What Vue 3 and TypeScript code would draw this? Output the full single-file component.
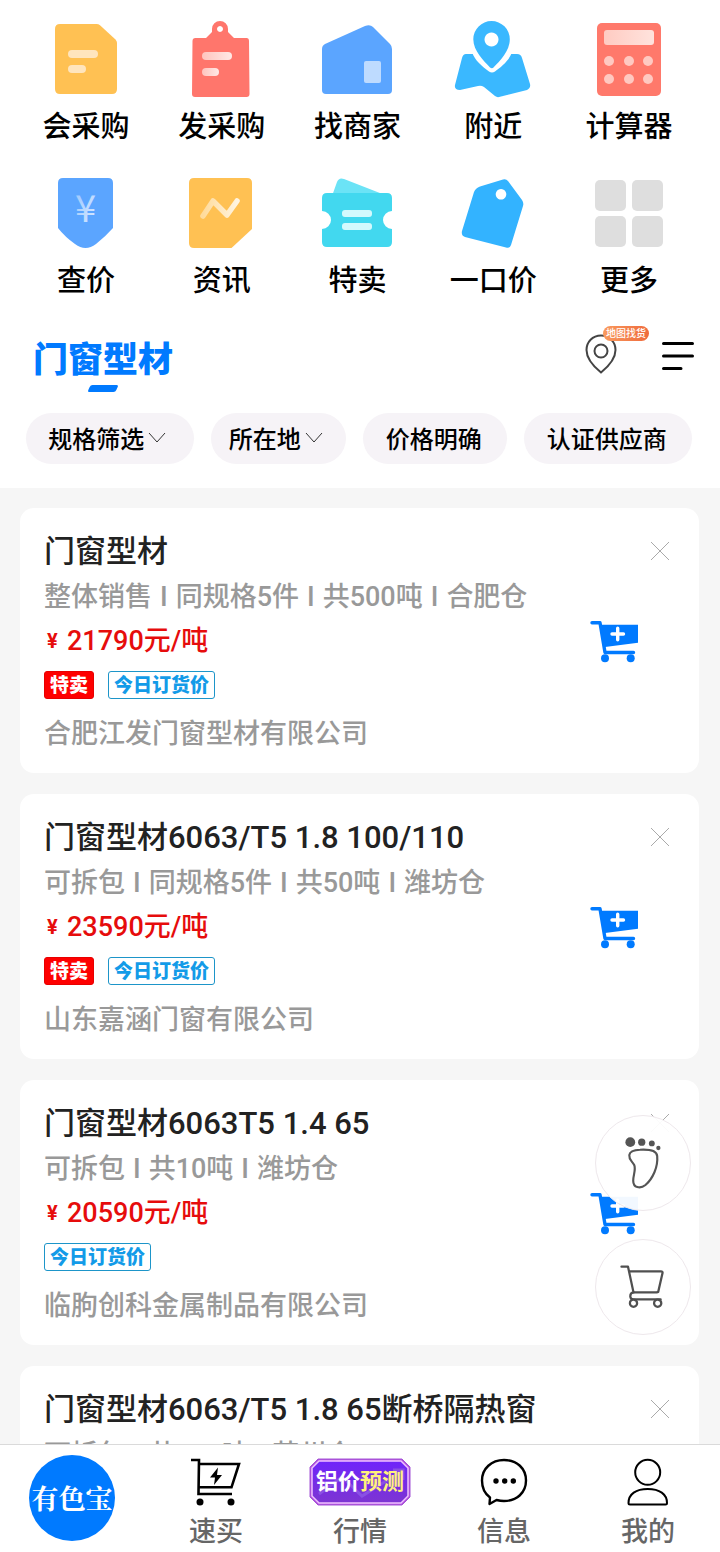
<script setup lang="ts">
interface Product {
  title: string
  meta: string[]
  price?: string
  special?: boolean
  company?: string
}

interface Filter {
  label: string
  dropdown: boolean
}

const filters: Filter[] = [
  { label: '规格筛选', dropdown: true },
  { label: '所在地', dropdown: true },
  { label: '价格明确', dropdown: false },
  { label: '认证供应商', dropdown: false },
]

const products: Product[] = [
  { title: '门窗型材', meta: ['整体销售', '同规格5件', '共500吨', '合肥仓'], price: '21790元/吨', special: true, company: '合肥江发门窗型材有限公司' },
  { title: '门窗型材6063/T5 1.8 100/110', meta: ['可拆包', '同规格5件', '共50吨', '潍坊仓'], price: '23590元/吨', special: true, company: '山东嘉涵门窗有限公司' },
  { title: '门窗型材6063T5 1.4 65', meta: ['可拆包', '共10吨', '潍坊仓'], price: '20590元/吨', special: false, company: '临朐创科金属制品有限公司' },
  { title: '门窗型材6063/T5 1.8 65断桥隔热窗', meta: ['可拆包', '共100吨', '苏州仓'] },
]
</script>

<template>
  <div class="app">
    <main class="content">
      <section class="top">
        <nav class="shortcuts" aria-label="快捷入口">
          <a class="shortcut" href="#">
            <svg viewBox="0 0 80 80" aria-hidden="true">
              <path d="M14 6H50.500Q52.500 6 54 7.300L69.500 21.500Q71 23 71 25V71Q71 76 66 76H14Q9 76 9 71V11Q9 6 14 6Z" fill="#ffc153" />
              <rect x="22" y="32" width="30" height="8" rx="4" fill="#ffe5bd" />
              <rect x="22" y="47" width="18" height="8" rx="4" fill="#ffe5bd" />
            </svg>
            <span>会采购</span>
          </a>
          <a class="shortcut" href="#">
            <svg viewBox="0 0 80 80" aria-hidden="true">
              <defs>
                <linearGradient id="redLine" x1="0" x2="1">
                  <stop offset="0" stop-color="#ffc4be" />
                  <stop offset="1" stop-color="#ffe9e6" />
                </linearGradient>
              </defs>
              <path fill-rule="evenodd" d="M30 11a8 8 0 0 1 16 0V14L52 20H64.500Q67 20 67 23L67.500 76Q67.500 79 64.500 79H13Q10 79 10 76L10.500 23Q10.500 20 13.500 20H24L30 14ZM38 8a3 3 0 1 0 0.010 0Z" fill="#ff766c" />
              <rect x="20" y="34" width="30" height="8" rx="4" fill="url(#redLine)" />
              <rect x="20" y="50" width="17" height="8" rx="4" fill="url(#redLine)" />
            </svg>
            <span>发采购</span>
          </a>
          <a class="shortcut" href="#">
            <svg viewBox="0 0 80 80" aria-hidden="true">
              <path d="M8 26L48 8Q53 6 56 9L73 26Q75 28 75 31V72Q75 76 71 76H9Q5 76 5 72V31Q5 27.500 8 26Z" fill="#5ba5ff" />
              <rect x="47" y="43" width="17" height="22" rx="2" fill="#bedbff" />
            </svg>
            <span>找商家</span>
          </a>
          <a class="shortcut" href="#">
            <svg viewBox="0 0 80 80" aria-hidden="true">
              <path d="M13 36H64Q68 36 69 40L77 66Q78 70 74 72L46 79Q44 79.500 42 78L31 69Q28 67 25 68L7 72Q1 72 2 67L9 40Q10 36 13 36Z" fill="#3ab8ff" />
              <path d="M19 34H59C56 43 48 49 42 53.500Q39 55.500 36 53.500C29 48 22 43 19 34Z" fill="#fff" />
              <path fill-rule="evenodd" d="M38.500 3a18.300 18.300 0 0 1 18.300 18.300C56.800 33 47 43 40.500 49.500Q39 51 37 49.500C31 43 20.300 33 20.300 21.300A18.300 18.300 0 0 1 38.500 3ZM38.500 14.500a7 7 0 1 0 0.010 0Z" fill="#3ab8ff" />
            </svg>
            <span>附近</span>
          </a>
          <a class="shortcut" href="#">
            <svg viewBox="0 0 80 80" aria-hidden="true">
              <defs>
                <linearGradient id="screen" x1="0" x2="1">
                  <stop offset="0" stop-color="#ffcbc2" />
                  <stop offset="1" stop-color="#ffe3dd" />
                </linearGradient>
              </defs>
              <rect x="8" y="5" width="64" height="73" rx="5" fill="#ff796b" />
              <rect x="15" y="12" width="50" height="15" rx="3" fill="url(#screen)" />
              <g fill="#ffc9c1">
                <circle cx="20" cy="43" r="5" /><circle cx="40" cy="43" r="5" /><circle cx="59" cy="43" r="5" />
                <circle cx="20" cy="61" r="5" /><circle cx="40" cy="61" r="5" /><circle cx="59" cy="61" r="5" />
              </g>
            </svg>
            <span>计算器</span>
          </a>
          <a class="shortcut" href="#">
            <svg viewBox="0 0 80 80" aria-hidden="true">
              <defs>
                <linearGradient id="yenFill" x1="0" y1="0" x2="1" y2="1">
                  <stop offset="0" stop-color="#8fc1ff" />
                  <stop offset="1" stop-color="#e3efff" />
                </linearGradient>
              </defs>
              <path d="M17 6H62Q67 6 67 11V56Q60 64 50 72Q39.500 80 29 72Q19 65 12 56V11Q12 6 17 6Z" fill="#5ba5ff" />
              <text class="yen-glyph" x="39.500" y="50" text-anchor="middle" fill="url(#yenFill)">¥</text>
            </svg>
            <span>查价</span>
          </a>
          <a class="shortcut" href="#">
            <svg viewBox="0 0 80 80" aria-hidden="true">
              <defs>
                <linearGradient id="trend" x1="0" x2="1">
                  <stop offset="0" stop-color="#ffdb9b" />
                  <stop offset="1" stop-color="#fff4e0" />
                </linearGradient>
              </defs>
              <path d="M12 6H65Q70 6 70 11V57L49.500 76H12Q7 76 7 71V11Q7 6 12 6Z" fill="#ffc153" />
              <path d="M21 44L31 29L45 43L55 29" fill="none" stroke="url(#trend)" stroke-width="5.500" stroke-linecap="round" stroke-linejoin="round" />
            </svg>
            <span>资讯</span>
          </a>
          <a class="shortcut" href="#">
            <svg viewBox="0 0 80 80" aria-hidden="true">
              <path d="M15 24L20 10Q22 5 27 7L68 23Z" fill="#6be3f6" />
              <path d="M10 21H70Q75 21 75 26V39A9 9 0 0 0 75 57V70Q75 75 70 75H10Q5 75 5 70V57A9 9 0 0 0 5 39V26Q5 21 10 21Z" fill="#42d8ef" />
              <rect x="25" y="38" width="30" height="7" rx="3" fill="#d3f9fd" />
              <rect x="25" y="51" width="30" height="7" rx="3" fill="#d3f9fd" />
            </svg>
            <span>特卖</span>
          </a>
          <a class="shortcut" href="#">
            <svg viewBox="0 0 80 80" aria-hidden="true">
              <path fill-rule="evenodd" d="M27 14.500L50 7.500Q53 6.500 55 9L69 28Q71 31 70 34L58 73Q57 76.500 53 75.500L12 65Q8 63.500 9 59L21 20Q22.500 16 27 14.500ZM48 17a5.300 5.300 0 1 0 0.010 0Z" fill="#33b3ff" />
            </svg>
            <span>一口价</span>
          </a>
          <a class="shortcut" href="#">
            <svg viewBox="0 0 80 80" aria-hidden="true" fill="#dedede">
              <rect x="6" y="8" width="31" height="31" rx="5" /><rect x="43" y="8" width="31" height="31" rx="5" />
              <rect x="6" y="44" width="31" height="31" rx="5" /><rect x="43" y="44" width="31" height="31" rx="5" />
            </svg>
            <span>更多</span>
          </a>
        </nav>

        <header class="section-head">
          <h1 class="section-title">门窗型材</h1>
          <div class="head-actions">
            <button class="map-button" type="button">
              <svg viewBox="0 0 32 40" aria-hidden="true" fill="none" stroke="#444" stroke-width="2">
                <path d="M16 1.500C7.500 1.500 1.500 8 1.500 16C1.500 24 8 32 16 38.500C24 32 30.500 24 30.500 16C30.500 8 24.500 1.500 16 1.500Z" />
                <circle cx="16" cy="17" r="6.500" />
              </svg>
              <span class="map-badge">地图找货</span>
            </button>
            <button class="menu-button" type="button" aria-label="菜单">
              <svg viewBox="0 0 34 30" aria-hidden="true" stroke="#000" stroke-width="3" stroke-linecap="round">
                <path d="M2.500 2.500H31.500M2.500 15H31.500M2.500 27.500H20" />
              </svg>
            </button>
          </div>
        </header>

        <div class="filters">
          <button v-for="filter in filters" :key="filter.label" class="filter" type="button">
            <span>{{ filter.label }}</span>
            <svg v-if="filter.dropdown" viewBox="0 0 18 12" aria-hidden="true">
              <path d="M1 1L9 10L17 1" fill="none" stroke="#333" stroke-width="1" />
            </svg>
          </button>
        </div>
      </section>

      <section class="list">
        <article v-for="product in products" :key="product.title" class="card">
          <div class="info">
            <h2 class="title">{{ product.title }}</h2>
            <p class="meta">
              <template v-for="(part, index) in product.meta" :key="part">
                <span v-if="index > 0">I</span>
                <span>{{ part }}</span>
              </template>
            </p>
            <template v-if="product.price">
              <p class="price"><span class="currency">¥</span>{{ product.price }}</p>
              <div class="tags">
                <span v-if="product.special" class="tag special">特卖</span>
                <span class="tag">今日订货价</span>
              </div>
              <p class="meta">{{ product.company }}</p>
            </template>
          </div>
          <div class="side">
            <button class="close" type="button" aria-label="关闭">
              <svg viewBox="0 0 24 24" aria-hidden="true"><path d="M3 3L21 21M21 3L3 21" stroke="#aaa" stroke-width="1" /></svg>
            </button>
            <button class="add" type="button" aria-label="加入购物车">
              <svg viewBox="0 0 48 43" aria-hidden="true">
                <path d="M10 4.700H48V22.700L15 27Z" fill="#007aff" />
                <path d="M2 2.700H10L15 32.500H43.500" fill="none" stroke="#007aff" stroke-width="3.400" stroke-linecap="round" stroke-linejoin="round" />
                <circle cx="15" cy="38.300" r="4" fill="#007aff" /><circle cx="40.700" cy="38.300" r="4" fill="#007aff" />
                <path d="M22 14H33.500M27.700 8.300V19.700" stroke="#fff" stroke-width="3.400" stroke-linecap="round" />
              </svg>
            </button>
          </div>
        </article>
      </section>

      <div class="floating">
        <button class="round" type="button" aria-label="足迹">
          <svg viewBox="0 0 96 96" aria-hidden="true">
            <g fill="#555">
              <circle cx="35" cy="26.700" r="5" /><circle cx="46.700" cy="26.700" r="3.700" />
              <circle cx="57" cy="28" r="3" /><circle cx="63.700" cy="32.700" r="2.200" />
            </g>
            <path d="M45 34.500C54 34 62 35 62.500 41C63.500 52 58 64 50.500 70.500C45 75 38 73 38 66C38 60 41 55 39 50C37 46 33.500 45 34 40C34.500 36 39 34.700 45 34.500Z" fill="none" stroke="#555" stroke-width="2.200" />
          </svg>
        </button>
        <button class="round" type="button" aria-label="购物车">
          <svg viewBox="0 0 96 96" aria-hidden="true" fill="none" stroke="#505050" stroke-width="2.300" stroke-linecap="round" stroke-linejoin="round">
            <path d="M26 27.300H32.700L38.300 53.500H62L63.500 53L68 33.500Q68 32 66.500 32H34" />
            <path d="M38.300 53.500Q35 54 35 57.500Q35.300 60.700 38 60.700H66" />
            <circle cx="38.300" cy="64.500" r="3.700" fill="#fff" /><circle cx="63" cy="64.500" r="3.700" fill="#fff" />
          </svg>
        </button>
      </div>
    </main>

    <nav class="tabbar" aria-label="主导航">
      <a class="tab" href="#"><span class="brand">有色宝</span></a>
      <a class="tab" href="#">
        <svg class="tab-icon" viewBox="0 0 50 48" aria-hidden="true" fill="none" stroke="#000" stroke-width="2.600">
          <path d="M0 2H8L7.500 36H41M8 6H48L40.500 29.300H8" />
          <path d="M27 9.500L19 19.500H24L23 27L31 17H26Z" fill="#000" stroke="none" />
          <circle cx="9" cy="44" r="3.500" fill="#000" stroke="none" /><circle cx="40" cy="44" r="3.500" fill="#000" stroke="none" />
        </svg>
        <span>速买</span>
      </a>
      <a class="tab" href="#">
        <span class="forecast">
          <svg viewBox="0 0 102 48" aria-hidden="true">
            <defs>
              <linearGradient id="violet" x1="0" y1="0" x2="0" y2="1">
                <stop offset="0" stop-color="#6f24fa" />
                <stop offset="1" stop-color="#7d35d2" />
              </linearGradient>
            </defs>
            <path d="M9 1H93L101 9V39L93 47H9L1 39V9Z" fill="#b04cdd" stroke="#a457d6" stroke-width="1" />
            <path d="M10 3H92L99 10V38L92 45H10L3 38V10Z" fill="url(#violet)" stroke="#efc2ff" stroke-width="1.500" />
            <path d="M10 36L33 19L53 38L93 13M84 12H94V22" fill="none" stroke="#8a50e4" stroke-width="3" />
          </svg>
          <span class="forecast-text">铝价<em>预测</em></span>
        </span>
        <span>行情</span>
      </a>
      <a class="tab" href="#">
        <svg class="tab-icon" viewBox="0 0 48 48" aria-hidden="true" fill="none" stroke="#000" stroke-width="2.400" stroke-linejoin="round">
          <path d="M10 39.500C4.500 35.500 2 29.500 2 22.500C2 10.500 11.500 2 24 2C37 2 46 10.500 46 22.500C46 34.500 37 43 24 43C21 43 18.500 42.500 16.500 42L9.500 46Z" />
          <g fill="#000" stroke="none"><circle cx="16" cy="23" r="2.700" /><circle cx="24.700" cy="23" r="2.700" /><circle cx="33.300" cy="23" r="2.700" /></g>
        </svg>
        <span>信息</span>
      </a>
      <a class="tab" href="#">
        <svg class="tab-icon" viewBox="0 0 48 48" aria-hidden="true" fill="none" stroke="#000" stroke-width="2" stroke-linejoin="round">
          <circle cx="23.700" cy="14.300" r="12.500" />
          <path d="M6 46.500Q4.500 46.500 4.500 45C4.500 36 12 31 23.700 31C35.500 31 43 36 43 45Q43 46.500 41.500 46.500Z" />
        </svg>
        <span>我的</span>
      </a>
    </nav>
  </div>
</template>

<style>
body {
  margin: 0;
}
</style>

<style scoped>
.app {
  display: flex;
  flex-direction: column;
  height: 100vh;
  overflow: hidden;
  background: #f6f6f6;
  color: #000;
  font-family: Roboto, "Noto Sans CJK SC", sans-serif;
  font-weight: 500;
}
.app * {
  box-sizing: border-box;
}
a {
  color: inherit;
  text-decoration: none;
}
button {
  padding: 0;
  border: 0;
  background: none;
  color: inherit;
  font: inherit;
}
svg {
  display: block;
}
h1,
h2,
p {
  margin: 0;
}
.content {
  position: relative;
  flex: 1;
  min-height: 0;
  overflow: hidden;
}
.top {
  padding: 18px 0 24px;
  background: #fff;
}
.shortcuts {
  display: grid;
  grid-template-columns: repeat(5, 1fr);
  row-gap: 25px;
  padding: 0 23px 0 18px;
}
.shortcut {
  display: flex;
  flex-direction: column;
  align-items: center;
  gap: 9px;
  font-size: 29px;
  line-height: 40px;
}
.shortcut svg {
  width: 80px;
  height: 80px;
}
.yen-glyph {
  font-family: "Noto Sans CJK SC", sans-serif;
  font-size: 38px;
  font-weight: 400;
}
.section-head {
  display: flex;
  justify-content: space-between;
  align-items: flex-start;
  margin-top: 25px;
  padding: 0 25px 0 33px;
}
.section-title {
  display: flex;
  flex-direction: column;
  align-items: center;
  padding-top: 13px;
  color: #007aff;
  font-size: 35px;
  font-weight: 900;
  line-height: 44px;
}
.section-title::after {
  width: 28px;
  height: 7px;
  margin-top: 2px;
  border-radius: 2px;
  background: #007aff;
  content: "";
  transform: skewX(-24deg);
}
.head-actions {
  display: flex;
  align-items: flex-start;
  gap: 44px;
}
.map-button {
  position: relative;
  margin-top: 8px;
}
.map-button svg {
  width: 32px;
  height: 40px;
}
.map-badge {
  position: absolute;
  top: -8px;
  left: 18px;
  padding: 0 3px;
  border-radius: 8px;
  background: linear-gradient(90deg, #f99a5d, #ef6b3d);
  color: #fff;
  font-size: 10px;
  line-height: 15px;
  white-space: nowrap;
}
.menu-button {
  margin-top: 15px;
}
.menu-button svg {
  width: 34px;
  height: 30px;
}
.filters {
  display: grid;
  grid-template-columns: 169fr 135fr 144fr 169fr;
  gap: 17px;
  margin-top: 21px;
  padding: 0 28px 0 26px;
}
.filter {
  display: flex;
  justify-content: center;
  align-items: center;
  gap: 4px;
  height: 51px;
  padding: 0 2px 2px 0;
  border-radius: 26px;
  background: #f6f3f7;
  font-size: 24px;
  white-space: nowrap;
}
.filter svg {
  width: 18px;
  height: 12px;
  margin-right: 4px;
}
.list {
  display: flex;
  flex-direction: column;
  gap: 21px;
  padding: 20px 21px 20px 20px;
}
.card {
  display: flex;
  justify-content: space-between;
  padding: 21px 27px 17px 24px;
  border-radius: 14px;
  background: #fff;
}
.info {
  min-width: 0;
}
.title {
  color: #222;
  font-size: 31px;
  font-weight: 500;
  line-height: 46px;
  white-space: nowrap;
}
.meta {
  display: flex;
  gap: 8px;
  color: #999;
  font-size: 27px;
  line-height: 44px;
  white-space: nowrap;
}
.price {
  display: flex;
  align-items: center;
  color: #e60c0c;
  font-size: 27px;
  line-height: 44px;
}
.currency {
  width: 23px;
  padding-left: 3px;
  font-size: 20px;
  font-weight: 700;
}
.tags {
  display: flex;
  gap: 14px;
  margin: 8px 0 13px;
}
.tag {
  height: 28px;
  padding: 0 5px;
  border: 1px solid #1d95c9;
  border-radius: 3px;
  color: #139be8;
  font-size: 19px;
  font-weight: 900;
  line-height: 28px;
}
.special {
  border-color: #e80000;
  background: #fe0000;
  color: #fff;
}
.side {
  display: flex;
  flex-direction: column;
  justify-content: flex-start;
  width: 82px;
  padding-top: 10px;
}
.close {
  align-self: flex-end;
}
.close svg {
  width: 24px;
  height: 24px;
}
.add {
  align-self: flex-start;
  margin-top: 57px;
}
.add svg {
  width: 48px;
  height: 43px;
}
.floating {
  position: absolute;
  right: 29px;
  bottom: 109px;
  display: flex;
  flex-direction: column;
  gap: 28px;
}
.round {
  width: 96px;
  height: 96px;
  border: 1px solid #eee8ec;
  border-radius: 50%;
  background: rgba(255, 255, 255, 0.95);
}
.round svg {
  width: 94px;
  height: 94px;
}
.tabbar {
  display: grid;
  grid-template-columns: repeat(5, 1fr);
  height: 108px;
  border-top: 1px solid #dadada;
  background: #fff;
}
.tab {
  display: flex;
  flex-direction: column;
  align-items: center;
  gap: 6px;
  padding-top: 13px;
  color: #666;
  font-size: 27px;
  line-height: 40px;
}
.tab-icon {
  height: 48px;
}
.brand {
  display: grid;
  place-items: center;
  width: 86px;
  height: 86px;
  margin-top: -3px;
  border-radius: 50%;
  background: #007aff;
  color: #fff;
  font-family: "Noto Serif CJK SC", "Noto Sans CJK SC", serif;
  font-size: 27px;
  font-weight: 700;
  white-space: nowrap;
}
.forecast {
  display: grid;
  place-items: center;
}
.forecast > * {
  grid-area: 1 / 1;
}
.forecast svg {
  width: 102px;
  height: 48px;
}
.forecast-text {
  z-index: 1;
  color: #fff;
  font-size: 22px;
  font-weight: 700;
}
.forecast-text em {
  color: #fff27c;
  font-style: normal;
}
</style>
